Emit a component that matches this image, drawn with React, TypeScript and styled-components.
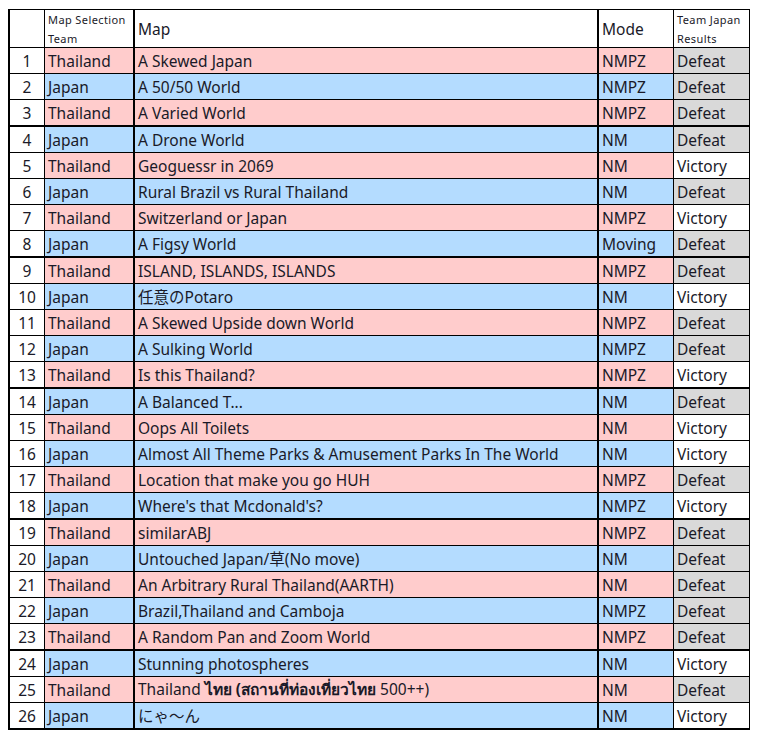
import React from "react";
import styled, { createGlobalStyle } from "styled-components";

const Global = createGlobalStyle`
  html, body { margin: 0; padding: 0; background: #fff; }
  body { padding: 9px 0 0 8px; font-family: "Noto Sans", "Noto Sans CJK JP", sans-serif; color: #1a1a28; }
  * { box-sizing: border-box; }
`;

type Team = "Thailand" | "Japan";
type Row = [Team, React.ReactNode, string, "Defeat" | "Victory"];

const Bold = styled.span`
  font-weight: 700;
`;

const rows: Row[] = [
  ["Thailand", "A Skewed Japan", "NMPZ", "Defeat"],
  ["Japan", "A 50/50 World", "NMPZ", "Defeat"],
  ["Thailand", "A Varied World", "NMPZ", "Defeat"],
  ["Japan", "A Drone World", "NM", "Defeat"],
  ["Thailand", "Geoguessr in 2069", "NM", "Victory"],
  ["Japan", "Rural Brazil vs Rural Thailand", "NM", "Defeat"],
  ["Thailand", "Switzerland or Japan", "NMPZ", "Victory"],
  ["Japan", "A Figsy World", "Moving", "Defeat"],
  ["Thailand", "ISLAND, ISLANDS, ISLANDS", "NMPZ", "Defeat"],
  ["Japan", "任意のPotaro", "NM", "Victory"],
  ["Thailand", "A Skewed Upside down World", "NMPZ", "Defeat"],
  ["Japan", "A Sulking World", "NMPZ", "Defeat"],
  ["Thailand", "Is this Thailand?", "NMPZ", "Victory"],
  ["Japan", "A Balanced T...", "NM", "Defeat"],
  ["Thailand", "Oops All Toilets", "NM", "Victory"],
  ["Japan", "Almost All Theme Parks & Amusement Parks In The World", "NM", "Victory"],
  ["Thailand", "Location that make you go HUH", "NMPZ", "Defeat"],
  ["Japan", "Where's that Mcdonald's?", "NMPZ", "Victory"],
  ["Thailand", "similarABJ", "NMPZ", "Defeat"],
  ["Japan", "Untouched Japan/草(No move)", "NM", "Defeat"],
  ["Thailand", "An Arbitrary Rural Thailand(AARTH)", "NM", "Defeat"],
  ["Japan", "Brazil,Thailand and Camboja", "NMPZ", "Defeat"],
  ["Thailand", "A Random Pan and Zoom World", "NMPZ", "Defeat"],
  ["Japan", "Stunning photospheres", "NM", "Victory"],
  [
    "Thailand",
    <span>
      {"Thailand "}
      <Bold>{"ไทย (สถานที่ท่องเที่ยวไทย"}</Bold>
      {" 500++)"}
    </span>,
    "NM",
    "Defeat",
  ],
  ["Japan", "にゃ〜ん", "NM", "Victory"],
];

const COLS = "34px 1px 88px 2px 462px 2px 74px 1px 75px";

const Table = styled.div`
  width: 742px;
  border-left: 2px solid #000;
  border-right: 1px solid #000;
  border-top: 1px solid #000;
  border-bottom: 2px solid #000;
`;

const GridRow = styled.div<{ $h: number; $thick?: boolean; $first?: boolean }>`
  display: grid;
  grid-template-columns: ${COLS};
  box-sizing: content-box;
  height: ${(p) => p.$h}px;
  border-top: ${(p) => (p.$first ? 0 : p.$thick ? 2 : 1)}px solid #000;
`;

const Sep = styled.div`
  background: #000;
`;

const Cell = styled.div<{ $bg?: string; $center?: boolean }>`
  background: ${(p) => p.$bg ?? "#fff"};
  display: flex;
  align-items: center;
  justify-content: ${(p) => (p.$center ? "center" : "flex-start")};
  padding-left: ${(p) => (p.$center ? 0 : 3)}px;
  font-size: 15.5px;
  white-space: pre;
  overflow: hidden;
`;

const SmallHead = styled(Cell)`
  font-size: 11px;
  line-height: 19px;
  white-space: normal;
  align-items: flex-start;
  letter-spacing: 0.4px;
`;

const PINK = "#ffcccc";
const BLUE = "#b4dcff";
const GRAY = "#d9d9d9";

export default function App() {
  const thickAfter = new Set([3, 8, 13, 18, 23]);
  return (
    <>
      <Global />
      <Table>
        <GridRow $h={37} $first>
          <Cell />
          <Sep />
          <SmallHead>
            <div>Map Selection<br />Team</div>
          </SmallHead>
          <Sep />
          <Cell>Map</Cell>
          <Sep />
          <Cell>Mode</Cell>
          <Sep />
          <SmallHead>
            <div>Team Japan<br />Results</div>
          </SmallHead>
        </GridRow>
        {rows.map(([team, map, mode, res], i) => {
          const bg = team === "Thailand" ? PINK : BLUE;
          return (
            <GridRow key={i} $h={25} $thick={thickAfter.has(i)}>
              <Cell $center>{i + 1}</Cell>
              <Sep />
              <Cell $bg={bg}>{team}</Cell>
              <Sep />
              <Cell $bg={bg}>{map}</Cell>
              <Sep />
              <Cell $bg={bg}>{mode}</Cell>
              <Sep />
              <Cell $bg={res === "Defeat" ? GRAY : "#fff"}>{res}</Cell>
            </GridRow>
          );
        })}
      </Table>
    </>
  );
}
